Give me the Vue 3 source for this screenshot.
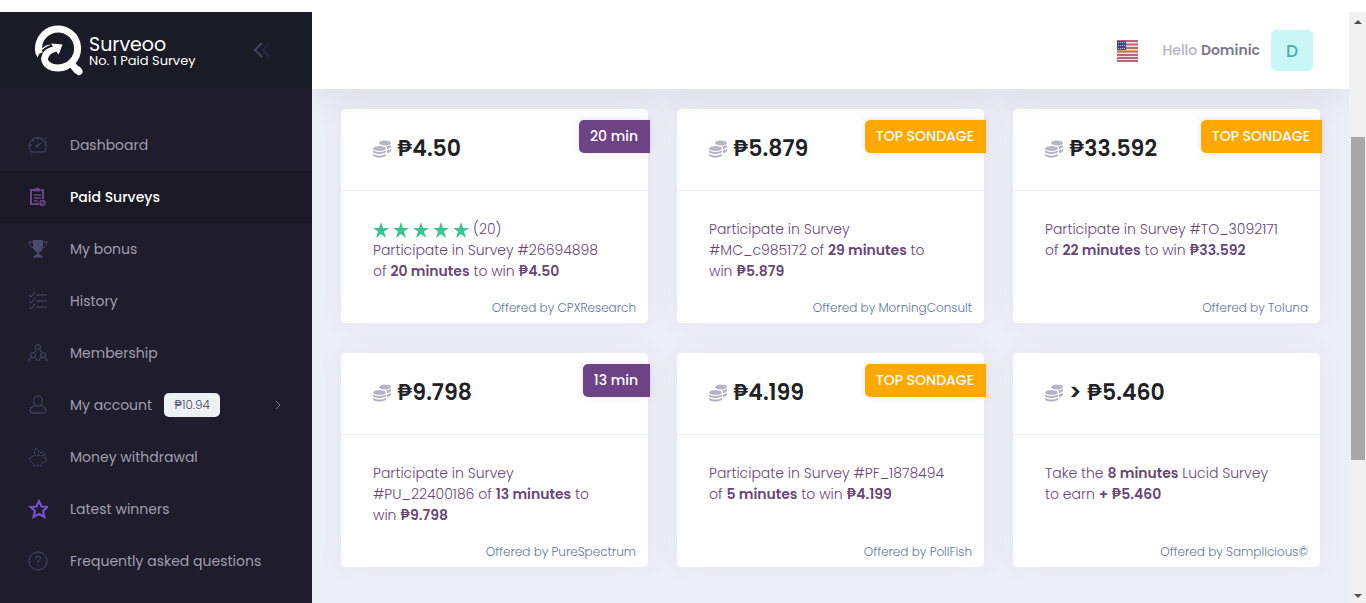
<script setup>
const menu = [
  { id: 'dash', label: 'Dashboard' },
  { id: 'survey', label: 'Paid Surveys', active: true },
  { id: 'bonus', label: 'My bonus' },
  { id: 'history', label: 'History' },
  { id: 'members', label: 'Membership' },
  { id: 'account', label: 'My account', badge: '₱10.94', arrow: true },
  { id: 'money', label: 'Money withdrawal' },
  { id: 'winners', label: 'Latest winners' },
  { id: 'faq', label: 'Frequently asked questions' }
]
const surveys = [
  { title: '₱4.50', tag: '20 min', top: false, stars: 20, lines: ['Participate in Survey #26694898', 'of **20 minutes** to win **₱4.50**'], by: 'CPXResearch' },
  { title: '₱5.879', tag: 'TOP SONDAGE', top: true, lines: ['Participate in Survey', '#MC_c985172 of **29 minutes** to', 'win **₱5.879**'], by: 'MorningConsult' },
  { title: '₱33.592', tag: 'TOP SONDAGE', top: true, lines: ['Participate in Survey #TO_3092171', 'of **22 minutes** to win **₱33.592**'], by: 'Toluna' },
  { title: '₱9.798', tag: '13 min', top: false, lines: ['Participate in Survey', '#PU_22400186 of **13 minutes** to', 'win **₱9.798**'], by: 'PureSpectrum' },
  { title: '₱4.199', tag: 'TOP SONDAGE', top: true, lines: ['Participate in Survey #PF_1878494', 'of **5 minutes** to win **₱4.199**'], by: 'PollFish' },
  { title: '> ₱5.460', lines: ['Take the **8 minutes** Lucid Survey', 'to earn **+ ₱5.460**'], by: 'Samplicious©' }
]
const parts = (line) => line.split('**').map((text, i) => ({ text, bold: i % 2 === 1 }))
</script>

<template>
  <div class="page">
    <aside class="sidebar">
      <div class="brand">
        <a href="#" class="brand-link">
          <svg class="logo" viewBox="0 0 50 52" aria-hidden="true">
            <path d="M5.2 29.500A19.500 19.500 0 1 1 24 44" fill="none" stroke="#fff" stroke-width="7" />
            <path d="M1.500 27Q2 31 3.500 33.500Q7 24 17 20.800Q12 20 8 24.500Z" fill="#fff" />
            <path d="M24.500 47.500C15 47.500 8 43 7 35C8 28 12 24 19 22.800L17 19.500L28.500 20.500L24.700 30.500L22.300 27.500C17 29 14 32 14 36C16 39 20 40.500 24.500 40.500Z" fill="#fff" />
            <path d="M36 38L44 47.500" stroke="#fff" stroke-width="7" />
            <path d="M44 46L45 47.500" stroke="#fff" stroke-width="7" stroke-linecap="round" />
          </svg>
          <span class="brand-text"><span class="brand-name">Surveoo</span><span class="brand-sub">No. 1 Paid Survey</span></span>
        </a>
        <button class="collapse" type="button" aria-label="Collapse menu">
          <svg width="18" height="20" viewBox="0 0 18 20" fill="none" stroke-width="2">
            <path d="M9 3L2 10L9 17" stroke="#43425f" /><path d="M16 3L10 10L16 17" stroke="#26254a" />
          </svg>
        </button>
      </div>
      <nav class="menu">
        <a v-for="m in menu" :key="m.id" href="#" class="item" :class="{ active: m.active }">
          <svg class="icon" :class="m.id" viewBox="0 0 20 20" aria-hidden="true">
            <g v-if="m.id === 'dash'"><path d="M3 17C0 12 1 7 5 4Q10 1 15 4M17 6Q20 11 17 17H3M10 3V5M2 10H4M16 10H18M4 5L6 7M15 6L19 2M9 11L13 8" /><circle cx="9" cy="11" r="1" /></g>
            <g v-else-if="m.id === 'survey'"><path d="M6 3H3V17H11M13 3H15V12" /><path d="M6 8H13M6 11H13M6 14H10" stroke-width="1.500" /><path d="M6 4V2H8Q9.500 0 11 2H12V4Z" fill="#6f4387" stroke-width="1" /><circle cx="14.500" cy="16" r="2.500" stroke-width="1.500" /><path d="M13 17L16 15" stroke-width="1" /></g>
            <g v-else-if="m.id === 'bonus'"><path d="M5 1H15V7Q15 12 11 13V15L14 17V18H6V17L9 15V13Q5 12 5 7Z" fill="#4a4b68" stroke="none" /><path d="M5 3H1Q1 8 6 9M15 3H19Q19 8 14 9M5 18H15" /></g>
            <g v-else-if="m.id === 'history'"><path d="M8 4H19M8 10H19M8 16H19M1 4L3 6L7 1M1 10L3 12L7 7M1 16L3 18L7 13" /></g>
            <g v-else-if="m.id === 'members'"><circle cx="10" cy="4" r="2.500" /><circle cx="5" cy="12" r="2.500" /><circle cx="15" cy="12" r="2.500" /><path d="M7 9L8 6.500M13 9L12 6.500M1 18Q1 15 4 14.500M6 14.500Q9 15 9 18M11 18Q11 15 14 14.500M16 14.500Q19 15 19 18" /></g>
            <g v-else-if="m.id === 'account'"><path d="M10 1C5 1 5 6 7 10L3 13Q1 18 4 18H16Q19 18 17 13L13 10C15 6 15 1 10 1ZM7 10Q10 13 13 10" /></g>
            <g v-else-if="m.id === 'money'"><path d="M5 9Q10 7 14 9L17 7L16 10L19 12L17 15L14 16L13 19H11L10 18L8 19H6L5 16Q2 14 2 12L1 11L4 10ZM7 7Q5 1 9 2Q12 4 10 6M12 6L15 5L17 7" stroke-dasharray="3 1" /></g>
            <g v-else-if="m.id === 'winners'"><path d="M11 2L13.500 7.500L19.500 8L15 12L16.500 18L11 15L5.500 18L7 12L2.500 8L8.500 7.500Z" /></g>
            <g v-else><circle cx="10" cy="10" r="9" /><path d="M7.500 8Q7.500 5 10 5Q13 5 12.500 8L10 10V12M10 14V15" /></g>
          </svg>
          <span class="label">{{ m.label }}</span>
          <span v-if="m.badge" class="badge">{{ m.badge }}</span>
          <svg v-if="m.arrow" class="arrow" viewBox="0 0 6 10" aria-hidden="true"><path d="M1 1L5 5L1 9" /></svg>
        </a>
      </nav>
    </aside>
    <div class="main">
      <header class="topbar">
        <button class="lang" type="button" aria-label="English">
          <svg width="21" height="22" viewBox="0 0 21 22" aria-hidden="true">
            <rect width="21" height="22" rx="2" fill="#f1dfe0" />
            <path d="M0 1H21M0 4.500H21M0 8H21M0 11.500H21M0 15H21M0 18H21M0 21H21" stroke="#b9657a" stroke-width="2" />
            <path d="M0 10.500H21" stroke="#eba765" stroke-width="1" />
            <rect width="9" height="9" y="1" fill="#3d4a86" />
            <path d="M1 2.500H9M1 5.500H9M1 8.500H9" stroke="#c5c9df" stroke-dasharray="1 1" />
          </svg>
        </button>
        <span class="hello">Hello <b>Dominic</b></span>
        <button class="avatar" type="button">D</button>
      </header>
      <main class="grid">
        <article v-for="s in surveys" :key="s.title" class="card">
          <header class="card-head">
            <svg class="coins" viewBox="0 0 18 18" aria-hidden="true">
              <ellipse cx="12" cy="3" rx="6" ry="2.500" />
              <path d="M13 6Q17 6 18 5V7Q17 9 14 9Q14 7 13 6ZM14 10Q17 10 18 9V11Q17 13 14 13Z" />
              <ellipse cx="6.500" cy="8.500" rx="6.500" ry="2.500" />
              <path d="M0 10.500Q6 13.500 13 10.500V12.500Q6 15.500 0 12.500ZM0 14Q6 17 13 14V16Q6 19.500 0 16Z" />
            </svg>
            <h3 class="price">{{ s.title }}</h3>
            <span v-if="s.tag" class="tag" :class="{ top: s.top }">{{ s.tag }}</span>
          </header>
          <div class="card-body">
            <div v-if="s.stars" class="stars">
              <svg v-for="n in 5" :key="n" viewBox="0 0 16 16" aria-hidden="true"><path d="M8 0L10 6H16L11 9.500L13 16L8 12L3 16L5 9.500L0 6H6Z" /></svg>
              <span>({{ s.stars }})</span>
            </div>
            <div v-for="line in s.lines" :key="line" class="line">
              <template v-for="(p, i) in parts(line)" :key="i"><b v-if="p.bold">{{ p.text }}</b><template v-else>{{ p.text }}</template></template>
            </div>
          </div>
          <footer class="offer">Offered by {{ s.by }}</footer>
        </article>
      </main>
    </div>
    <div class="scroll" aria-hidden="true">
      <i class="up"></i><i class="thumb"></i><i class="down"></i>
    </div>
  </div>
</template>

<style>
body { background: #fff; overflow: hidden; }
</style>

<style scoped>
* { box-sizing: border-box; }
.page { display: flex; height: 100vh; padding-top: 12px; background: #fff; font-family: Poppins, Inter, sans-serif; }
button { border: 0; padding: 0; background: none; font: inherit; }
a { color: inherit; text-decoration: none; }
.sidebar { flex: 0 0 312px; background: #1f1d2c; overflow: hidden; }
.brand { display: flex; align-items: center; justify-content: space-between; height: 76px; padding: 0 41px 0 34px; background: #1b1a27; }
.brand-link { display: flex; align-items: center; gap: 5px; color: #fff; }
.logo { width: 50px; height: 52px; }
.brand-text { display: flex; flex-direction: column; padding-top: 4px; }
.brand-name { font-size: 19px; line-height: 18px; }
.brand-sub { font-size: 13px; line-height: 14px; white-space: nowrap; }
.collapse { display: flex; }
.menu { padding-top: 31px; }
.item { display: flex; align-items: center; height: 52px; padding: 0 31px 0 28px; color: #a09eae; font-size: 14px; }
.item.active { background: #1a1925; color: #fff; font-weight: 500; }
.icon { width: 20px; height: 20px; margin-right: 22px; fill: none; stroke: #4b4a69; stroke-width: 1; }
.icon.survey { stroke: #6f4387; stroke-width: 2; }
.icon.winners { stroke: #7950d6; stroke-width: 2; }
.label { white-space: nowrap; }
.badge { margin-left: 12px; padding: 0 10px; border-radius: 5px; background: #edf1f5; color: #45445c; font-size: 12px; font-weight: 300; line-height: 24px; }
.arrow { width: 6px; height: 10px; margin-left: auto; fill: none; stroke: #77758a; }
.main { flex: 1; min-width: 0; overflow: hidden; background: #eeeef8; }
.topbar { display: flex; align-items: center; justify-content: flex-end; height: 77px; padding-right: 36px; background: #fff; box-shadow: 0 0 40px rgba(82, 84, 90, .14); position: relative; }
.lang { display: flex; margin-right: 24px; }
.hello { color: #b5b3c3; font-size: 14px; font-weight: 500; margin-right: 11px; }
.hello b { color: #7c7a88; font-weight: 600; }
.avatar { width: 42px; height: 41px; border-radius: 5px; background: #c9f7f5; color: #4aaea6; font-size: 17px; font-weight: 500; }
.grid { display: grid; grid-template-columns: repeat(3, 1fr); gap: 30px 29px; padding: 20px 29px; }
.card { display: flex; flex-direction: column; min-height: 214px; border-radius: 5px; background: #fff; box-shadow: 0 0 30px rgba(82, 63, 105, .05); }
.card-head { position: relative; display: flex; align-items: center; height: 82px; padding: 0 32px 2px; border-bottom: 1px solid #ebedf3; }
.coins { width: 18px; height: 18px; margin: 1px 6px 0 0; fill: #b7b4c4; }
.price { margin: 0; color: #212124; font-size: 22px; font-weight: 600; }
.tag { position: absolute; top: 11px; right: -2px; padding: 0 12px 0 11px; border-radius: 5px 0 0 5px; background: #6e4385; color: #fff; font-size: 14px; font-weight: 500; line-height: 33px; box-shadow: 0 0 6px rgba(82, 63, 105, .15); }
.tag.top { background: #ffa800; }
.card-body { flex: 1; padding: 28px 0 0 32px; color: #684777; font-size: 14px; font-weight: 300; line-height: 21px; }
.card-body b { font-weight: 600; }
.line { white-space: nowrap; }
.stars { display: flex; align-items: center; gap: 4px; height: 21px; }
.stars svg { width: 16px; height: 16px; fill: #38c592; }
.offer { padding: 0 12px 6px; text-align: right; color: #5a78a4; font-size: 12px; font-weight: 300; line-height: 18px; }
.scroll { flex: 0 0 17px; display: flex; flex-direction: column; align-items: center; background: #f1f1f1; padding: 8px 1px 5px 2px; }
.up, .down { border: 4px solid transparent; }
.up { border-top: 0; border-bottom-color: #505050; }
.down { border-bottom: 0; border-top-color: #505050; margin-top: auto; }
.thumb { width: 14px; height: 323px; margin-top: 113px; background: #a8a8a8; }
</style>
